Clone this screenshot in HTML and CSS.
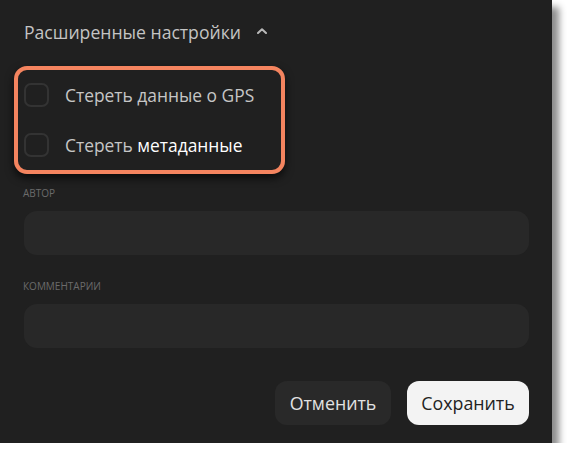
FILE: index.html
```html
<!DOCTYPE html>
<html lang="ru">
<head>
<meta charset="utf-8">
<title>Расширенные настройки</title>
<link rel="stylesheet" href="styles.css">
</head>
<body>
<div class="panel">
  <div class="section-title">
    <span>Расширенные настройки</span>
    <svg class="chevron" width="10" height="6" viewBox="0 0 10 6"><path d="M1 5 L5 1.2 L9 5" fill="none" stroke="#b9b9b9" stroke-width="2" stroke-linecap="round" stroke-linejoin="round"/></svg>
  </div>
  <div class="highlight">
    <label class="check-row"><span class="box"></span><span class="check-text">Стереть данные о GPS</span></label>
    <label class="check-row"><span class="box"></span><span class="check-text">Стереть <span class="strong">метаданные</span></span></label>
  </div>
  <div class="field field-first">
    <div class="field-label">Автор</div>
    <div class="input"></div>
  </div>
  <div class="field">
    <div class="field-label">Комментарии</div>
    <div class="input"></div>
  </div>
  <div class="actions">
    <button class="btn btn-cancel">Отменить</button>
    <button class="btn btn-save">Сохранить</button>
  </div>
</div>
</body>
</html>
```
FILE: styles.css
```css
html, body {
  margin: 0;
  padding: 0;
  background: #ffffff;
}

body {
  font-family: "Open Sans", "Noto Sans", sans-serif;
}

.panel {
  width: 552px;
  height: 443px;
  box-sizing: border-box;
  background: #202020;
  padding: 20px 23px 0 24px;
  box-shadow: 7px 7px 7px rgba(0, 0, 0, 0.45);
  display: flex;
  flex-direction: column;
}

.section-title {
  display: flex;
  align-items: center;
  height: 24px;
  font-size: 17.6px;
  color: #c4c4c4;
}

.chevron {
  margin-left: 16px;
  margin-top: -2px;
}

.highlight {
  margin-top: 22px;
  margin-left: -10px;
  width: 271px;
  height: 108px;
  box-sizing: border-box;
  border: 4px solid #f4845f;
  border-radius: 13px;
  box-shadow: 0 4px 8px rgba(0, 0, 0, 0.7);
  padding-left: 6px;
  display: flex;
  flex-direction: column;
}

.check-row {
  height: 50px;
  display: flex;
  align-items: center;
  gap: 16px;
}

.box {
  width: 25px;
  height: 24px;
  box-sizing: border-box;
  border: 2px solid #333333;
  border-radius: 7px;
}

.check-text {
  font-size: 17.4px;
  color: #c6c6c6;
}

.strong {
  color: #ffffff;
}

.field {
  margin-top: 25px;
  display: flex;
  flex-direction: column;
}

.field-first {
  margin-top: 13px;
}

.field-label {
  height: 12px;
  line-height: 12px;
  font-size: 10px;
  text-transform: uppercase;
  color: #6b6b6b;
  margin-left: -1px;
}

.input {
  margin-top: 12px;
  height: 44px;
  border-radius: 13px;
  background: #282828;
}

.actions {
  margin-top: 33px;
  display: flex;
  justify-content: flex-end;
  gap: 16px;
}

.btn {
  height: 44px;
  border: none;
  border-radius: 12px;
  font-family: "Open Sans", "Noto Sans", sans-serif;
  font-size: 17.8px;
  padding: 0;
}

.btn-cancel {
  width: 116px;
  background: #292929;
  color: #e2e2e2;
}

.btn-save {
  width: 122px;
  background: #f3f3f3;
  color: #222222;
}
```
